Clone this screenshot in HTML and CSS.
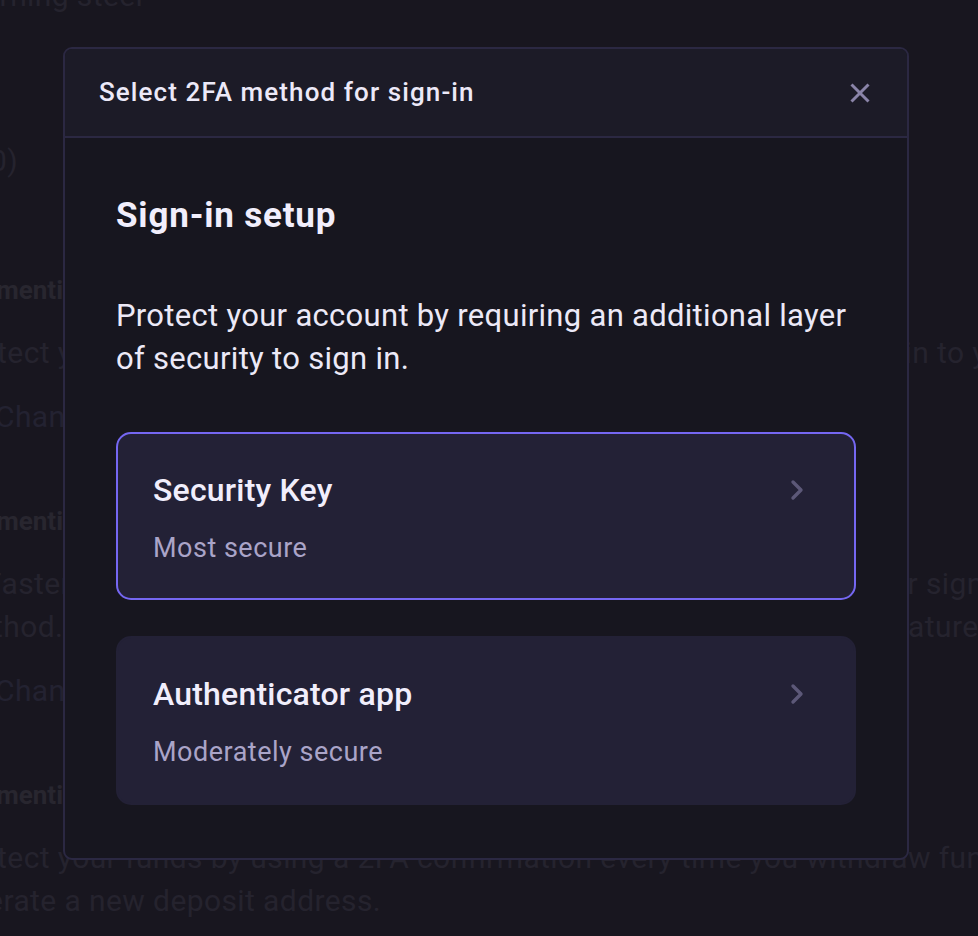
FILE: index.html
```html
<!DOCTYPE html>
<html lang="en">
<head>
<meta charset="utf-8">
<title>Select 2FA method</title>
<link rel="stylesheet" href="styles.css">
</head>
<body>
<div class="page">
  <p class="bg-line first">Learning steel</p>
  <p class="bg-line count">(10)</p>
  <section class="bg-section sec-first">
    <h3 class="bg-heading">Commenting 2FA</h3>
    <p class="bg-line">Protect your account by using a 2FA confirmation every time you sign in to your account from a new device.</p>
    <p class="bg-link">Change</p>
  </section>
  <section class="bg-section">
    <h3 class="bg-heading">Commenting 2FA</h3>
    <p class="bg-line indent-f">Faster and more secure, passkeys let you use a device to check your sign-in</p>
    <p class="bg-line">method. Some devices and browsers do not support this brand new feature.</p>
    <p class="bg-link">Change</p>
  </section>
  <section class="bg-section">
    <h3 class="bg-heading">Commenting 2FA</h3>
    <p class="bg-line">Protect your funds by using a 2FA confirmation every time you withdraw funds or</p>
    <p class="bg-line indent-g">Generate a new deposit address.</p>
  </section>
</div>

<div class="dialog" role="dialog">
  <header class="dialog-header">
    <h2 class="dialog-title">Select 2FA method for sign-in</h2>
    <button class="close" aria-label="Close">
      <svg width="22" height="22" viewBox="0 0 22 22"><path d="M2.5 2.5L19.5 19.5M19.5 2.5L2.5 19.5" stroke="#8a84a8" stroke-width="3" fill="none"/></svg>
    </button>
  </header>
  <div class="dialog-body">
    <h1 class="setup-title">Sign-in setup</h1>
    <p class="setup-text">Protect your account by requiring an additional layer of security to sign in.</p>
    <div class="options">
      <div class="option selected">
        <div class="option-text">
          <div class="option-title">Security Key</div>
          <div class="option-sub">Most secure</div>
        </div>
        <svg class="chev" width="14" height="22" viewBox="0 0 14 22"><path d="M3 3L11 11L3 19" stroke="#5c5878" stroke-width="3.4" stroke-linecap="round" stroke-linejoin="round" fill="none"/></svg>
      </div>
      <div class="option">
        <div class="option-text">
          <div class="option-title">Authenticator app</div>
          <div class="option-sub">Moderately secure</div>
        </div>
        <svg class="chev" width="14" height="22" viewBox="0 0 14 22"><path d="M3 3L11 11L3 19" stroke="#5c5878" stroke-width="3.4" stroke-linecap="round" stroke-linejoin="round" fill="none"/></svg>
      </div>
    </div>
  </div>
</div>
</body>
</html>
```
FILE: styles.css
```css
* { box-sizing: border-box; }
html, body {
  margin: 0;
  padding: 0;
  width: 978px;
  height: 936px;
  overflow: hidden;
  background: #18161f;
  font-family: Roboto, "Liberation Sans", sans-serif;
}
.page {
  display: flow-root;
  margin-left: -50px;
  width: 1100px;
  color: #25232e;
  font-size: 30px;
  letter-spacing: 0.4px;
}
.bg-line, .bg-link, .bg-heading {
  margin: 0;
  height: 43px;
  line-height: 43px;
  white-space: nowrap;
  overflow: hidden;
}
.first { margin-top: -26px; }
.count { margin-top: 122px; margin-left: 12px; }
.sec-first { margin-top: 87px; }
.bg-section + .bg-section { margin-top: 62px; }
.bg-heading {
  font-weight: 700;
  font-size: 26px;
  color: #28262f;
  margin-bottom: 19px;
  margin-left: -8px;
  letter-spacing: 0;
}
.bg-link { margin-top: 21px; margin-left: 45px; color: #232231; }
.indent-f { margin-left: 35px; }
.indent-g { margin-left: -17px; }

.dialog {
  position: absolute;
  left: 63px;
  top: 47px;
  width: 846px;
  height: 813px;
  border: 2px solid #2b2842;
  border-radius: 9px;
  background: #17161f;
  overflow: hidden;
  display: flex;
  flex-direction: column;
}
.dialog-header {
  height: 89px;
  flex: none;
  background: #1c1b27;
  border-bottom: 2px solid #2b2842;
  display: flex;
  align-items: center;
  justify-content: space-between;
  padding: 0 36px 0 34px;
}
.dialog-title {
  margin: 0 0 1px;
  font-size: 26px;
  font-weight: 500;
  color: #ece9f8;
  letter-spacing: 1.1px;
}
.close {
  background: none;
  border: 0;
  padding: 0;
  width: 22px;
  height: 22px;
  display: flex;
  align-items: center;
  justify-content: center;
}
.dialog-body {
  padding: 56px 51px 0 51px;
}
.setup-title {
  margin: 0;
  font-size: 35px;
  line-height: 44px;
  font-weight: 700;
  color: #f1eefc;
  letter-spacing: 0.8px;
}
.setup-text {
  margin: 56px 0 0;
  font-size: 31px;
  line-height: 43px;
  color: #ece9f7;
  width: 740px;
  letter-spacing: 0.3px;
}
.options {
  margin-top: 52px;
  display: flex;
  flex-direction: column;
  gap: 36px;
}
.option {
  height: 169px;
  border: 2px solid #232136;
  border-radius: 15px;
  background: #232136;
  display: flex;
  align-items: flex-start;
  justify-content: space-between;
  padding: 36px 50px 0 35px;
}
.option.selected {
  border-color: #7567f2;
  height: 168px;
}
.option-title {
  font-size: 32px;
  line-height: 40px;
  font-weight: 500;
  color: #f1eefc;
  letter-spacing: 0.2px;
}
.option-sub {
  margin-top: 20px;
  font-size: 27px;
  line-height: 36px;
  color: #aaa4c8;
  letter-spacing: 0.5px;
}
.chev { margin-top: 9px; }
```
